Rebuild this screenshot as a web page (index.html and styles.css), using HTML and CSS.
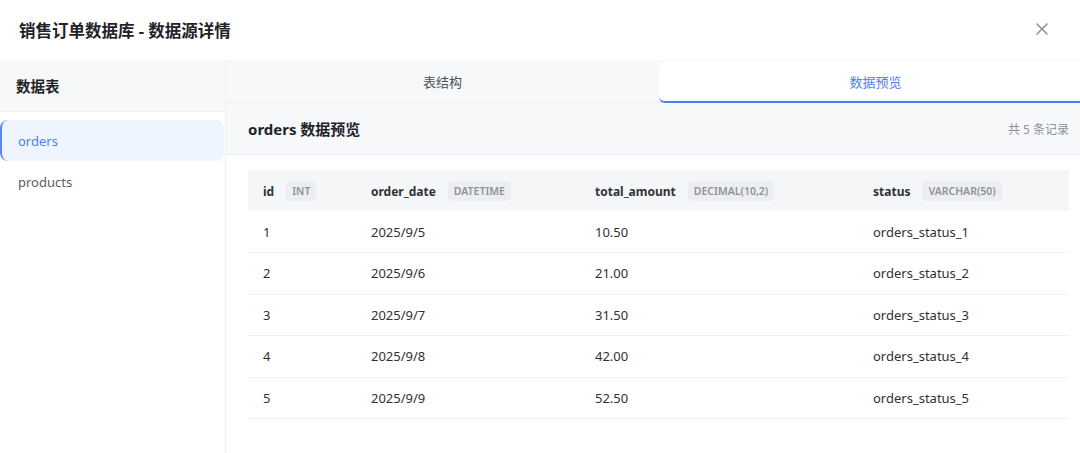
FILE: index.html
```html
<!DOCTYPE html>
<html lang="zh-CN">
<head>
<meta charset="utf-8">
<link rel="stylesheet" href="styles.css">
</head>
<body>
<div class="modal">
  <header class="modal-header">
    <h1 class="modal-title">销售订单数据库 - 数据源详情</h1>
    <button class="close-btn" aria-label="关闭">
      <svg width="12" height="12" viewBox="0 0 12 12"><path d="M1 1L11 11M11 1L1 11" stroke="#8a929e" stroke-width="1.6" stroke-linecap="round"/></svg>
    </button>
  </header>
  <div class="modal-body">
    <aside class="sidebar">
      <div class="sidebar-head">数据表</div>
      <ul class="table-list">
        <li class="table-item active">orders</li>
        <li class="table-item">products</li>
      </ul>
    </aside>
    <main class="main">
      <div class="tabs">
        <div class="tab">表结构</div>
        <div class="tab active">数据预览</div>
      </div>
      <div class="panel-head">
        <div class="panel-title">orders 数据预览</div>
        <div class="panel-count">共 5 条记录</div>
      </div>
      <div class="table-wrap">
        <table class="data">
          <colgroup><col class="c1"><col class="c2"><col class="c3"><col class="c4"></colgroup>
          <thead>
            <tr>
              <th><span class="name">id</span><span class="type">INT</span></th>
              <th><span class="name">order_date</span><span class="type">DATETIME</span></th>
              <th><span class="name">total_amount</span><span class="type">DECIMAL(10,2)</span></th>
              <th><span class="name">status</span><span class="type">VARCHAR(50)</span></th>
            </tr>
          </thead>
          <tbody>
            <tr><td>1</td><td>2025/9/5</td><td>10.50</td><td>orders_status_1</td></tr>
            <tr><td>2</td><td>2025/9/6</td><td>21.00</td><td>orders_status_2</td></tr>
            <tr><td>3</td><td>2025/9/7</td><td>31.50</td><td>orders_status_3</td></tr>
            <tr><td>4</td><td>2025/9/8</td><td>42.00</td><td>orders_status_4</td></tr>
            <tr><td>5</td><td>2025/9/9</td><td>52.50</td><td>orders_status_5</td></tr>
          </tbody>
        </table>
      </div>
    </main>
  </div>
</div>
</body>
</html>
```

FILE: styles.css
```css
* { box-sizing: border-box; margin: 0; padding: 0; }
html, body { width: 1080px; height: 453px; overflow: hidden; background: #fff; }
body {
  font-family: "Noto Sans", "Noto Sans CJK SC", sans-serif;
  color: #303133;
}
.modal { width: 1080px; height: 453px; display: flex; flex-direction: column; }
.modal-header {
  height: 60px;
  flex: none;
  display: flex;
  align-items: center;
  justify-content: space-between;
  padding: 0 28px 0 19px;
}
.modal-title { font-size: 16.5px; font-weight: 700; color: #1f2329; }
.close-btn { border: 0; background: none; width: 20px; height: 20px; display: flex; align-items: center; justify-content: center; margin-top: -3px; }
.modal-body { flex: 1; display: flex; min-height: 0; }
.sidebar { width: 226px; flex: none; border-right: 1px solid #eef0f3; display: flex; flex-direction: column; }
.sidebar-head {
  height: 52px;
  background: #f7f8fa;
  border-bottom: 1px solid #eceef2;
  display: flex; align-items: center;
  padding-left: 16px;
  font-size: 14.5px; font-weight: 700; color: #1f2329;
}
.table-list { list-style: none; padding: 8px 1px 0 0; display: flex; flex-direction: column; }
.table-item {
  height: 41px;
  display: flex; align-items: center;
  padding-left: 18px;
  font-size: 13px; color: #5a5e66;
  border-radius: 8px;
}
.table-item.active { background: #eef5ff; color: #4f7df3; border-left: 2px solid #5a86f5; padding-left: 16px; }
.main { flex: 1; min-width: 0; display: flex; flex-direction: column; overflow: hidden; }
.tabs {
  height: 43px;
  flex: none;
  background: #f7f8fa;
  border-bottom: 1px solid #eceef2;
  display: grid;
  grid-template-columns: 433px 433px;
  padding-top: 1px;
}
.tab { display: flex; align-items: center; justify-content: center; font-size: 13px; color: #4a4f57; }
.tab.active {
  background: #fff;
  color: #4f7df3;
  border-bottom: 2px solid #4f7df3;
  border-top-left-radius: 8px;
  border-bottom-left-radius: 6px;
  margin-bottom: -1px;
}
.panel-head {
  height: 52px;
  flex: none;
  background: #f7f8fa;
  border-bottom: 1px solid #eceef2;
  display: flex; align-items: center; justify-content: space-between;
  padding: 0 11px 0 22px;
}
.panel-title { font-size: 15px; font-weight: 700; color: #1f2329; }
.panel-count { font-size: 12px; color: #8c9099; }
.table-wrap { padding: 15px 12px 0 22px; }
.data { width: 821px; border-collapse: collapse; table-layout: fixed; }
.c1 { width: 108px; } .c2 { width: 224px; } .c3 { width: 278px; } .c4 { width: 211px; }
.data th {
  height: 41px;
  background: #f5f6f8;
  text-align: left;
  padding: 0 0 0 15px;
  font-weight: 700;
  font-size: 12px;
  color: #2f3238;
  white-space: nowrap;
}
.name { vertical-align: middle; }
.type {
  display: inline-block;
  vertical-align: middle;
  margin-left: 12px;
  padding: 0 6px;
  height: 20px;
  line-height: 20px;
  border-radius: 4px;
  background: #edeef1;
  color: #8d929b;
  font-size: 10.5px;
  font-weight: 600;
}
.data td {
  height: 41.5px;
  padding: 0 0 0 15px;
  font-size: 13px;
  color: #303133;
  border-bottom: 1px solid #f1f2f4;
}
```
